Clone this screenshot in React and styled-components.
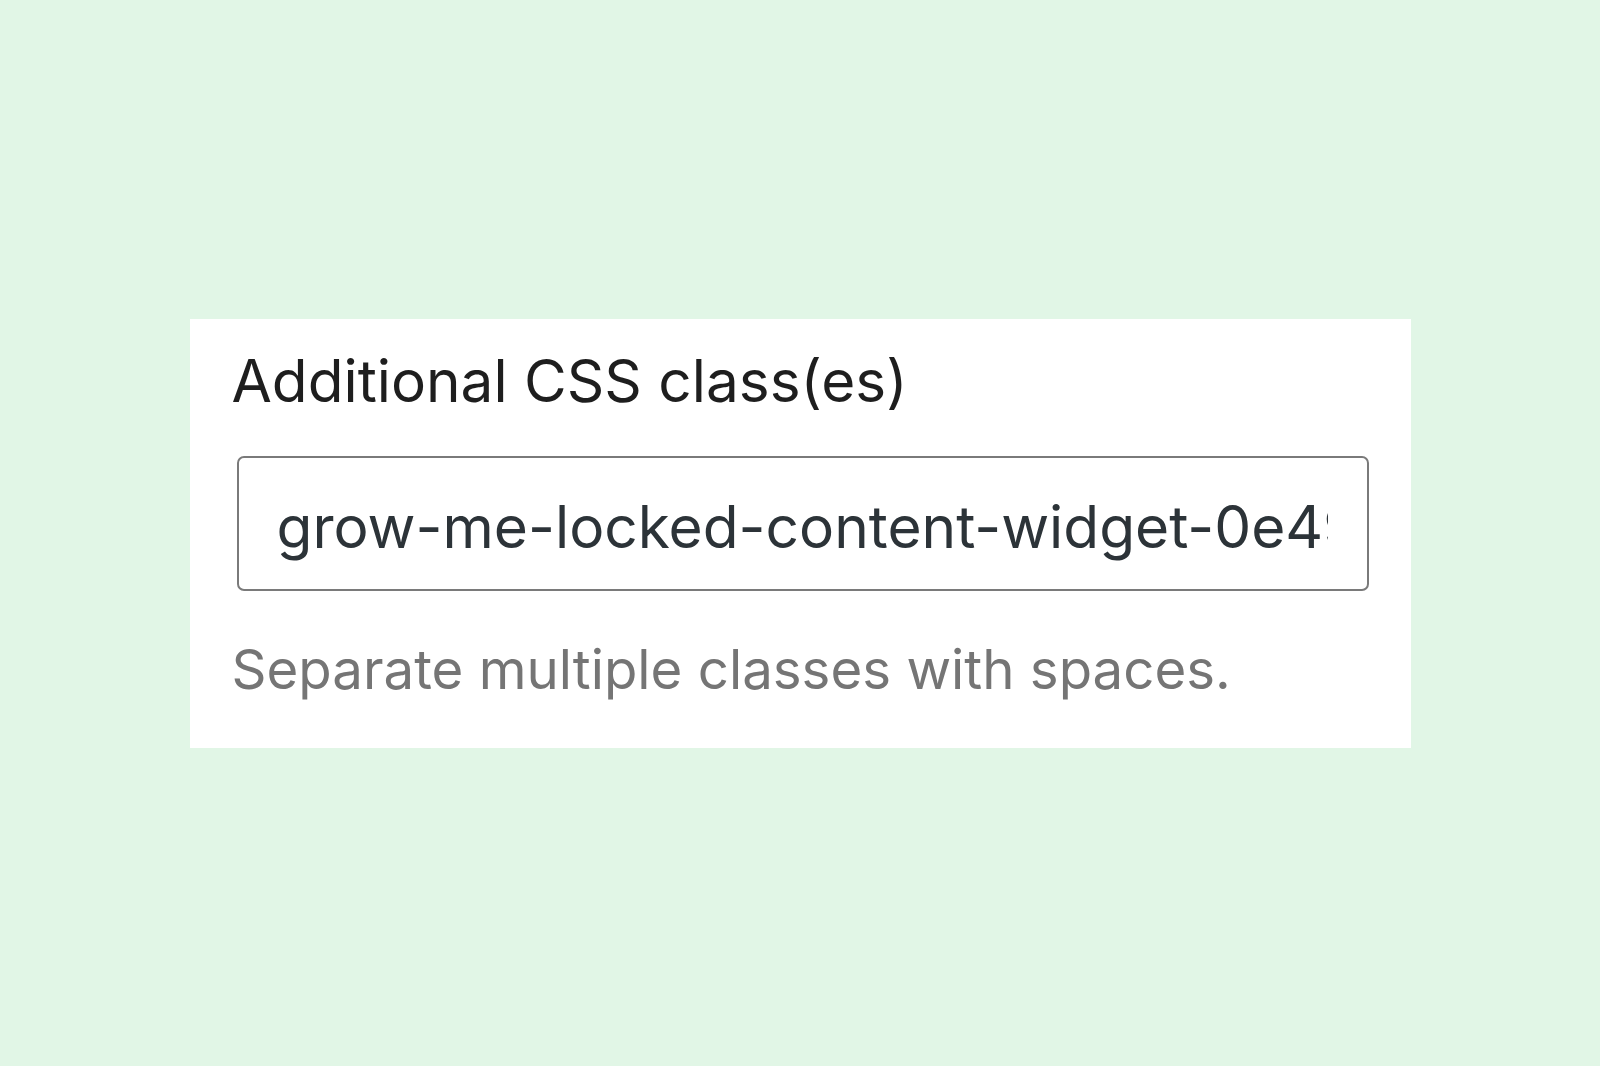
import React from "react";
import styled, { createGlobalStyle } from "styled-components";

const GlobalStyle = createGlobalStyle`
  html, body {
    margin: 0;
    padding: 0;
    background: #e1f6e6;
  }
  body {
    font-family: Inter, "Noto Sans", "Liberation Sans", sans-serif;
  }
`;

const Page = styled.div`
  width: 100%;
  min-height: 100vh;
  display: flex;
  align-items: center;
  justify-content: center;
  background: #e1f6e6;
`;

const Panel = styled.div`
  width: 1221px;
  height: 429px;
  box-sizing: border-box;
  padding: 26px 42px 0 42px;
  background: #ffffff;
  display: flex;
  flex-direction: column;
`;

const Label = styled.label`
  font-size: 58.5px;
  line-height: 71px;
  color: #1e1e1e;
  margin-bottom: 40px;
`;

const TextInput = styled.input`
  width: 1132px;
  height: 135px;
  margin-left: 5px;
  box-sizing: border-box;
  padding: 6px 39px 0 38px;
  border: 2px solid #7a7a7a;
  border-radius: 7px;
  background: #ffffff;
  font-family: Inter, "Noto Sans", "Liberation Sans", sans-serif;
  font-size: 58.6px;
  color: #2c3338;
  outline: none;
`;

const Help = styled.p`
  margin: 45px 0 0 0;
  font-size: 54.6px;
  line-height: 66px;
  color: #757575;
`;

export default function App() {
  return (
    <Page>
      <GlobalStyle />
      <Panel>
        <Label htmlFor="css-class">Additional CSS class(es)</Label>
        <TextInput
          id="css-class"
          type="text"
          readOnly
          value="grow-me-locked-content-widget-0e49"
        />
        <Help>Separate multiple classes with spaces.</Help>
      </Panel>
    </Page>
  );
}
